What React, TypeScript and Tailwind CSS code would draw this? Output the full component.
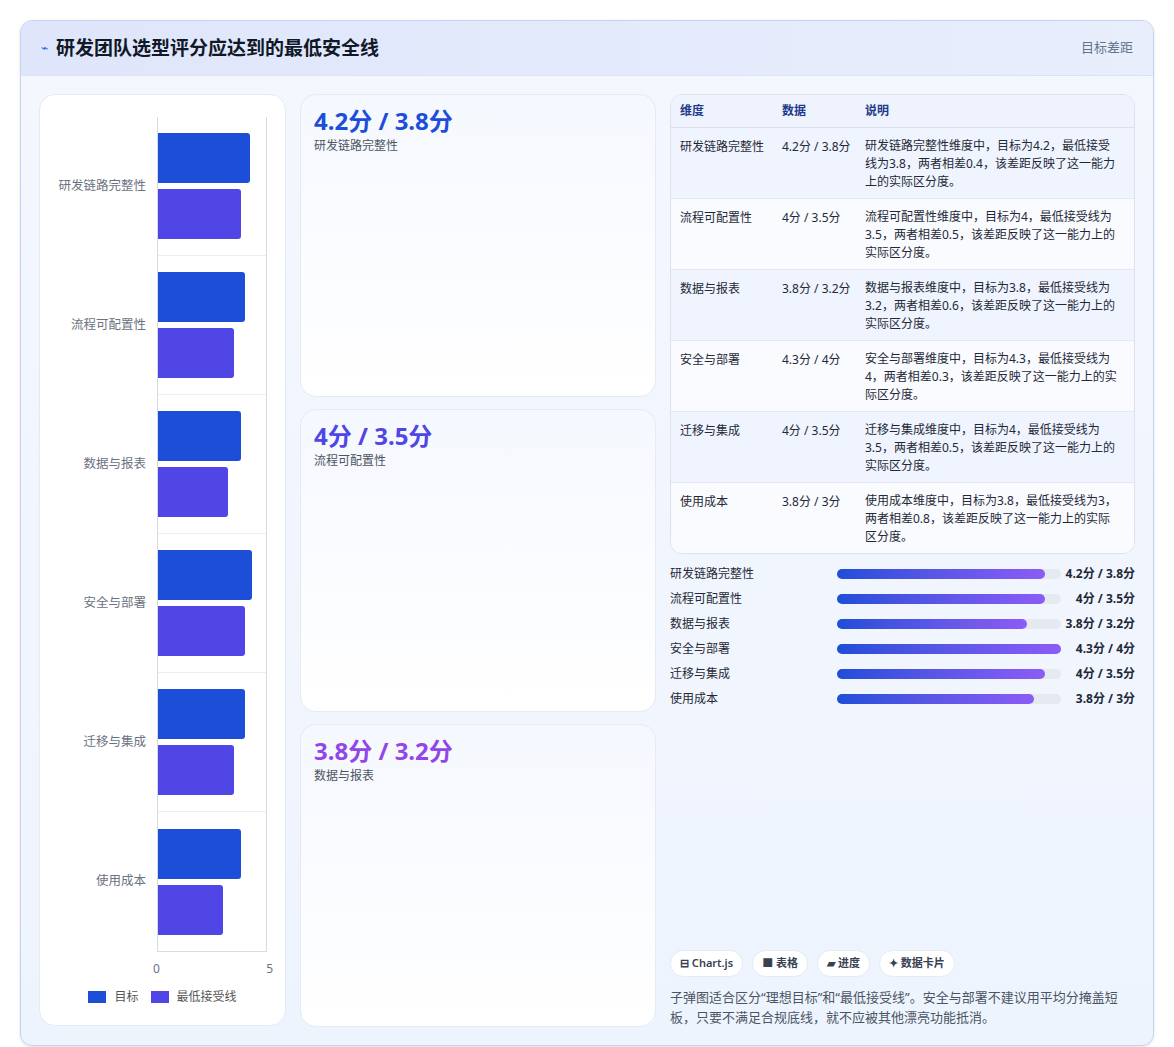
import React from 'react';

const dims = [
  { name: '研发链路完整性', t: 4.2, m: 3.8, data: '4.2分 / 3.8分', desc: '研发链路完整性维度中，目标为4.2，最低接受线为3.8，两者相差0.4，该差距反映了这一能力上的实际区分度。', fill: 93 },
  { name: '流程可配置性', t: 4, m: 3.5, data: '4分 / 3.5分', desc: '流程可配置性维度中，目标为4，最低接受线为3.5，两者相差0.5，该差距反映了这一能力上的实际区分度。', fill: 93 },
  { name: '数据与报表', t: 3.8, m: 3.2, data: '3.8分 / 3.2分', desc: '数据与报表维度中，目标为3.8，最低接受线为3.2，两者相差0.6，该差距反映了这一能力上的实际区分度。', fill: 85 },
  { name: '安全与部署', t: 4.3, m: 4, data: '4.3分 / 4分', desc: '安全与部署维度中，目标为4.3，最低接受线为4，两者相差0.3，该差距反映了这一能力上的实际区分度。', fill: 100 },
  { name: '迁移与集成', t: 4, m: 3.5, data: '4分 / 3.5分', desc: '迁移与集成维度中，目标为4，最低接受线为3.5，两者相差0.5，该差距反映了这一能力上的实际区分度。', fill: 93 },
  { name: '使用成本', t: 3.8, m: 3, data: '3.8分 / 3分', desc: '使用成本维度中，目标为3.8，最低接受线为3，两者相差0.8，该差距反映了这一能力上的实际区分度。', fill: 88 },
];

const cards = [
  { v: '4.2分 / 3.8分', l: '研发链路完整性', c: 'text-[#1d4ed8]' },
  { v: '4分 / 3.5分', l: '流程可配置性', c: 'text-[#4f46e5]' },
  { v: '3.8分 / 3.2分', l: '数据与报表', c: 'text-[#9346e8]' },
];

const PX = 21.8;

const App = () => {
  return (
    <div className="min-h-screen bg-white p-5 text-[#1f2937]" style={{ fontFamily: '"Noto Sans", "Noto Sans CJK SC", sans-serif' }}>
      <div className="rounded-xl border border-[#c7d2f0] bg-gradient-to-b from-[#f4f7fe] to-[#eef4fe] overflow-hidden shadow-sm">
        <div className="h-[55px] flex items-center justify-between px-5 bg-gradient-to-r from-[#dfe6fb] to-[#e8eefc] border-b border-[#dbe3f7]">
          <div className="flex items-center gap-2">
            <span className="text-[#2563eb] text-[12px]">⌁</span>
            <h1 className="text-[19px] font-bold text-[#111827]">研发团队选型评分应达到的最低安全线</h1>
          </div>
          <span className="text-[13px] text-[#64748b]">目标差距</span>
        </div>
        <div className="flex gap-[14px] p-[18px] pb-[18px]">
          {/* chart */}
          <div className="w-[247px] h-[932px] bg-white rounded-2xl border border-[#e5eaf3] flex flex-col pt-[22px] pb-[20px] shrink-0">
            <div className="flex">
              <div className="w-[117px] flex flex-col">
                {dims.map(d => (
                  <div key={d.name} className="h-[139px] flex items-center justify-end pr-[11px] text-[12.5px] text-[#6b7280]">{d.name}</div>
                ))}
              </div>
              <div className="w-[110px] border-l border-r border-[#d6dae1] border-b relative">
                {dims.map((d, i) => (
                  <div key={d.name} className={`h-[139px] flex flex-col justify-center gap-[6px] ${i < 5 ? 'border-b border-[#eceef2]' : ''}`}>
                    <div className="h-[50px] bg-[#1d4ed8] rounded-r-[3px]" style={{ width: d.t * PX }} />
                    <div className="h-[50px] bg-[#4f46e5] rounded-r-[3px]" style={{ width: d.m * PX }} />
                  </div>
                ))}
              </div>
            </div>
            <div className="flex justify-between w-[120px] ml-[113px] mt-[8px] text-[12px] text-[#6b7280]">
              <span>0</span><span>5</span>
            </div>
            <div className="flex items-center justify-center gap-2 mt-[10px] text-[12px] text-[#555]">
              <span className="w-[18px] h-[12px] bg-[#1d4ed8]" />目标
              <span className="w-[18px] h-[12px] bg-[#4f46e5] ml-1" />最低接受线
            </div>
          </div>
          {/* cards */}
          <div className="w-[356px] flex flex-col gap-[12px] shrink-0">
            {cards.map(c => (
              <div key={c.l} className="h-[303px] rounded-2xl border border-[#e5eaf3] bg-gradient-to-b from-[#f5f8fe] to-white px-[13px] py-[10px]">
                <div className={`text-[24px] font-bold leading-[32px] ${c.c}`}>{c.v}</div>
                <div className="text-[12px] text-[#4b5563]">{c.l}</div>
              </div>
            ))}
          </div>
          {/* right */}
          <div className="flex-1 flex flex-col">
            <div className="rounded-xl border border-[#dbe2ee] overflow-hidden bg-white">
              <table className="w-full text-[12px] text-[#1f2937]">
                <thead>
                  <tr className="bg-[#eef3fe] text-[#1e3a8a] text-left h-[32px] border-b border-[#dbe2ee]">
                    <th className="font-semibold pl-[9px] w-[111px]">维度</th>
                    <th className="font-semibold w-[83px]">数据</th>
                    <th className="font-semibold">说明</th>
                  </tr>
                </thead>
                <tbody>
                  {dims.map((d, i) => (
                    <tr key={d.name} className={`${i % 2 === 0 ? 'bg-[#eff4fe]' : 'bg-[#f9fbff]'} ${i < 5 ? 'border-b border-[#e3e8f2]' : ''} align-top`}>
                      <td className="pl-[9px] pt-[10px]">{d.name}</td>
                      <td className="pt-[10px] pr-2 leading-[18px]">{d.data}</td>
                      <td className="pt-[9px] pb-[7px] pr-[14px] leading-[18px]">{d.desc}</td>
                    </tr>
                  ))}
                </tbody>
              </table>
            </div>
            <div className="flex flex-col gap-[8px] mt-[12px]">
              {dims.map(d => (
                <div key={d.name} className="flex items-center h-[17px] text-[12px]">
                  <span className="w-[163px] text-[#1f2937]">{d.name}</span>
                  <div className="flex-1 h-[10px] bg-[#e5e9f0] rounded-full mx-[4px]">
                    <div className="h-full rounded-full bg-gradient-to-r from-[#1d4ed8] to-[#8b5cf6]" style={{ width: `${d.fill}%` }} />
                  </div>
                  <span className="w-[70px] text-right font-bold">{d.data}</span>
                </div>
              ))}
            </div>
            <div className="flex-1" />
            <div className="flex gap-[9px]">
              {['⊟ Chart.js', '■ 表格', '▰ 进度', '✦ 数据卡片'].map(c => (
                <span key={c} className="px-[9px] h-[27px] flex items-center rounded-full bg-white border border-[#e5eaf3] text-[11px] font-semibold text-[#374151]">{c}</span>
              ))}
            </div>
            <p className="mt-[10px] text-[13px] leading-[20px] text-[#4b5563]">子弹图适合区分“理想目标”和“最低接受线”。安全与部署不建议用平均分掩盖短板，只要不满足合规底线，就不应被其他漂亮功能抵消。</p>
          </div>
        </div>
      </div>
    </div>
  );
};

export default App;
